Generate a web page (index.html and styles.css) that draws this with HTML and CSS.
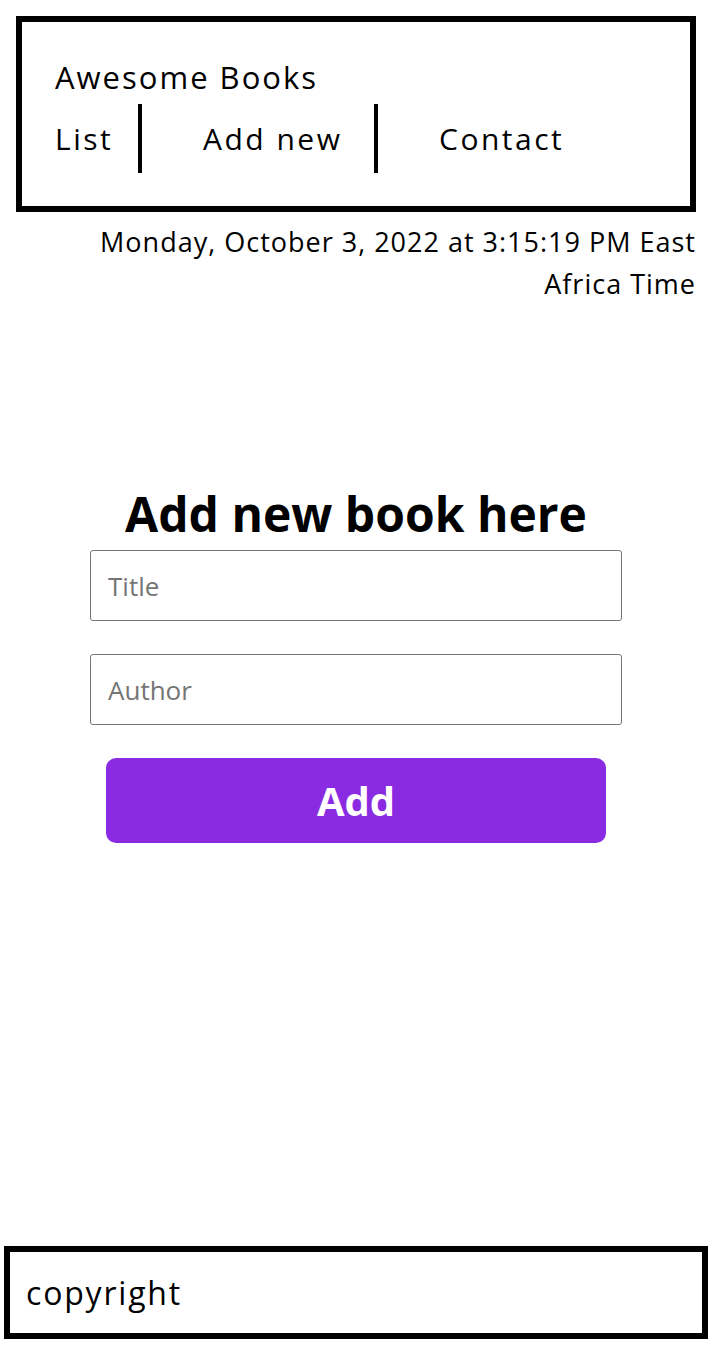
FILE: index.html
```html
<!DOCTYPE html>
<html lang="en">
<head>
<meta charset="utf-8">
<title>Awesome Books</title>
<link rel="stylesheet" href="styles.css">
</head>
<body>
<header class="site-header">
  <h1 class="brand">Awesome Books</h1>
  <nav class="nav">
    <a class="nav-link" href="#">List</a>
    <a class="nav-link" href="#">Add new</a>
    <a class="nav-link" href="#">Contact</a>
  </nav>
</header>
<p class="date">Monday, October 3, 2022 at 3:15:19 PM East Africa Time</p>
<main class="main">
  <section class="add-book">
    <h2 class="add-title">Add new book here</h2>
    <form class="form">
      <input class="field" type="text" placeholder="Title">
      <input class="field" type="text" placeholder="Author">
      <button class="add-btn" type="button">Add</button>
    </form>
  </section>
</main>
<footer class="footer">
  <p class="copy">copyright</p>
</footer>
</body>
</html>
```

FILE: styles.css
```css
* { box-sizing: border-box; }
html, body { margin: 0; padding: 0; }
body {
  font-family: "Open Sans", "Noto Sans", sans-serif;
  color: #000;
  background: #fff;
  min-height: 100vh;
  display: flex;
  flex-direction: column;
  padding: 16px 16px 15px;
}
.site-header {
  border: 6px solid #000;
  height: 196px;
  padding: 37px 33px 0;
}
.brand {
  margin: 0;
  font-size: 31px;
  font-weight: 400;
  line-height: 36px;
  letter-spacing: 2px;
}
.nav {
  display: grid;
  grid-template-columns: 87px 236px auto;
  margin-top: 9px;
}
.nav-link {
  color: #000;
  text-decoration: none;
  font-size: 30px;
  letter-spacing: 2.5px;
  line-height: 69px;
  height: 69px;
  padding-left: 61px;
  border-right: 4px solid #000;
  white-space: nowrap;
}
.nav-link:first-child { padding-left: 0; }
.nav-link:last-child { border-right: 0; }
.date {
  margin: 9px 0 0;
  text-align: right;
  font-size: 27px;
  line-height: 42px;
  letter-spacing: 1px;
}
.main { flex: 1; }
.add-book {
  margin-top: 179px;
  display: flex;
  flex-direction: column;
  align-items: center;
}
.add-title {
  margin: 0;
  font-size: 48px;
  font-weight: 700;
  line-height: 60px;
}
.form {
  display: flex;
  flex-direction: column;
  align-items: center;
  width: 532px;
  gap: 33px;
  margin-top: 6px;
}
.field {
  width: 532px;
  height: 71px;
  border: 1px solid #767676;
  border-radius: 3px;
  padding: 0 17px;
  font-family: inherit;
  font-size: 26px;
  color: #000;
}
.field::placeholder { color: #757575; }
.add-btn {
  width: 500px;
  height: 85px;
  border: 0;
  border-radius: 10px;
  background: #8a2be2;
  color: #fff;
  font-family: inherit;
  font-size: 40px;
  font-weight: 700;
}
.footer {
  margin: 0 -12px;
  height: 93px;
  border: 6px solid #000;
  display: flex;
  align-items: center;
  padding: 0 16px;
}
.copy {
  margin: 0;
  font-size: 32px;
  letter-spacing: 1.8px;
}
```
